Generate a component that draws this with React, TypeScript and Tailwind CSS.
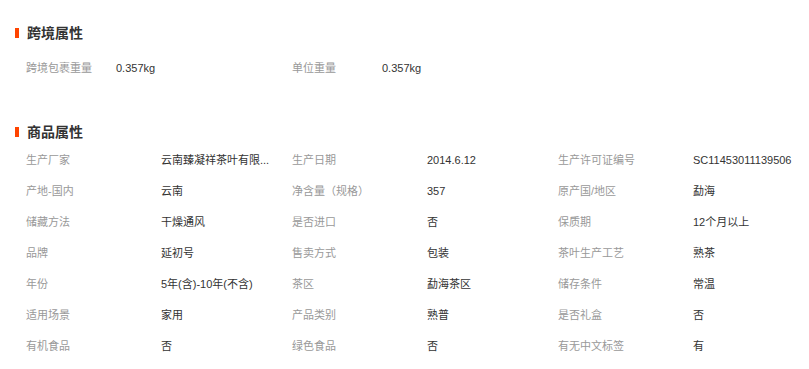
import React from "react";

const font = { fontFamily: '"Liberation Sans", Arial, "Noto Sans CJK SC", sans-serif' };

function Title({ text }: { text: string }) {
  return (
    <div className="flex items-center h-5">
      <div className="w-1 h-[10px] bg-[#ff4400]" />
      <div className="ml-2 text-[14px] font-bold text-[#333] leading-5">{text}</div>
    </div>
  );
}

const cross: [string, string][] = [
  ["跨境包裹重量", "0.357kg"],
  ["单位重量", "0.357kg"],
];

const attrs: [string, string][] = [
  ["生产厂家", "云南臻凝祥茶叶有限..."],
  ["生产日期", "2014.6.12"],
  ["生产许可证编号", "SC11453011139506"],
  ["产地-国内", "云南"],
  ["净含量（规格）", "357"],
  ["原产国/地区", "勐海"],
  ["储藏方法", "干燥通风"],
  ["是否进口", "否"],
  ["保质期", "12个月以上"],
  ["品牌", "延初号"],
  ["售卖方式", "包装"],
  ["茶叶生产工艺", "熟茶"],
  ["年份", "5年(含)-10年(不含)"],
  ["茶区", "勐海茶区"],
  ["储存条件", "常温"],
  ["适用场景", "家用"],
  ["产品类别", "熟普"],
  ["是否礼盒", "否"],
  ["有机食品", "否"],
  ["绿色食品", "否"],
  ["有无中文标签", "有"],
];

export default function App() {
  return (
    <div className="w-[809px] h-[369px] bg-white pl-[15px] pt-[23px]" style={font}>
      <Title text="跨境属性" />
      <div className="mt-[10px] pl-[11px] grid grid-cols-[266px_266px] text-[11px]">
        {cross.map(([k, v]) => (
          <div key={k} className="flex h-[31px] items-center">
            <div className="w-[90px] shrink-0 text-[#999]">{k}</div>
            <div className="text-[#333]">{v}</div>
          </div>
        ))}
      </div>
      <div className="mt-[38px]">
        <Title text="商品属性" />
      </div>
      <div className="mt-[3px] pl-[11px] grid grid-cols-[266px_266px_266px] text-[11px]">
        {attrs.map(([k, v]) => (
          <div key={k} className="flex h-[31px] items-center">
            <div className="w-[135px] shrink-0 text-[#999]">{k}</div>
            <div className="whitespace-nowrap text-[#333]">{v}</div>
          </div>
        ))}
      </div>
    </div>
  );
}
